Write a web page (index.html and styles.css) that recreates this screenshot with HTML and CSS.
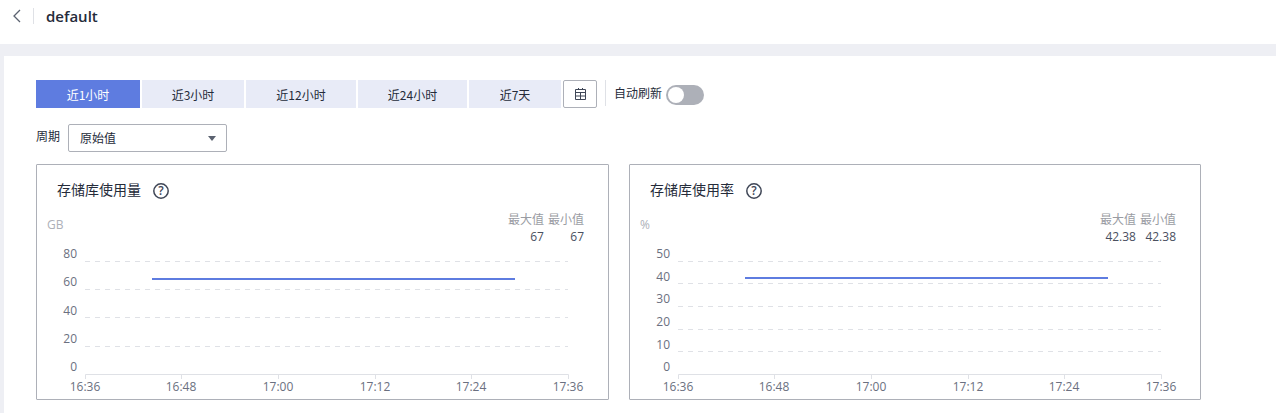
FILE: index.html
```html
<!DOCTYPE html>
<html lang="zh">
<head>
  <meta charset="UTF-8">
  <title>default</title>
  <link rel="stylesheet" href="styles.css">
</head>
<body>
  <header class="top-bar">
    <svg class="back-icon" width="10" height="14" viewBox="0 0 10 14"><path d="M8 1 L2 7 L8 13" fill="none" stroke="#5b6270" stroke-width="1.3"/></svg>
    <span class="top-sep"></span>
    <h1 class="page-title">default</h1>
  </header>

  <main class="panel">
    <div class="range-row">
      <button class="range-btn active w-104">近1小时</button>
      <button class="range-btn w-102">近3小时</button>
      <button class="range-btn w-110">近12小时</button>
      <button class="range-btn w-109">近24小时</button>
      <button class="range-btn w-92">近7天</button>
      <button class="cal-btn">
        <svg width="11" height="12" viewBox="0 0 11 12"><path d="M3.5 0V2M7.5 0V2M0.5 1.5h10v10H0.5zM0.5 4.5h10M0.5 8h10M5.5 4.5V11.5" fill="none" stroke="#3f4656" stroke-width="1"/></svg>
      </button>
      <span class="row-sep"></span>
      <span class="auto-label">自动刷新</span>
      <span class="toggle"><span class="knob"></span></span>
    </div>

    <div class="period-row">
      <span class="period-label">周期</span>
      <div class="select">原始值<span class="caret"></span></div>
    </div>

    <div class="charts">
      <section class="chart-card">
        <div class="card-title">存储库使用量
          <svg class="help" width="16" height="16" viewBox="0 0 16 16"><circle cx="8" cy="8" r="7.2" fill="none" stroke="#3f4656" stroke-width="1.5"/><text x="8" y="12" text-anchor="middle" class="help-mark">?</text></svg>
        </div>
        <div class="legend">
          <div class="legend-col"><span>最大值</span><b>67</b></div>
          <div class="legend-col"><span>最小值</span><b>67</b></div>
        </div>
        <svg class="plot" width="570" height="235" viewBox="0 0 570 235">
          <text x="10" y="64" class="unit">GB</text>
          <g class="grid">
            <path d="M48 96.5H531M48 124.5H531M48 152.5H531M48 181.5H531"/>
          </g>
          <g class="ylabels">
            <text x="40" y="93">80</text><text x="40" y="121">60</text><text x="40" y="150">40</text><text x="40" y="178">20</text><text x="40" y="206">0</text>
          </g>
          <path class="axis" d="M48.5 214V209.5H531.5V214M144.5 209.5V214M241.5 209.5V214M338.5 209.5V214M434.5 209.5V214"/>
          <g class="xlabels">
            <text x="48" y="226">16:36</text><text x="144" y="226">16:48</text><text x="241" y="226">17:00</text><text x="338" y="226">17:12</text><text x="434" y="226">17:24</text><text x="531" y="226">17:36</text>
          </g>
          <path class="line" d="M115 114H478"/>
        </svg>
      </section>

      <section class="chart-card">
        <div class="card-title">存储库使用率
          <svg class="help" width="16" height="16" viewBox="0 0 16 16"><circle cx="8" cy="8" r="7.2" fill="none" stroke="#3f4656" stroke-width="1.5"/><text x="8" y="12" text-anchor="middle" class="help-mark">?</text></svg>
        </div>
        <div class="legend">
          <div class="legend-col"><span>最大值</span><b>42.38</b></div>
          <div class="legend-col"><span>最小值</span><b>42.38</b></div>
        </div>
        <svg class="plot" width="570" height="235" viewBox="0 0 570 235">
          <text x="10" y="64" class="unit">%</text>
          <g class="grid">
            <path d="M48 96.5H531M48 118.5H531M48 141.5H531M48 164.5H531M48 186.5H531"/>
          </g>
          <g class="ylabels">
            <text x="40" y="93">50</text><text x="40" y="116">40</text><text x="40" y="138">30</text><text x="40" y="161">20</text><text x="40" y="184">10</text><text x="40" y="206">0</text>
          </g>
          <path class="axis" d="M48.5 214V209.5H531.5V214M144.5 209.5V214M241.5 209.5V214M338.5 209.5V214M434.5 209.5V214"/>
          <g class="xlabels">
            <text x="48" y="226">16:36</text><text x="144" y="226">16:48</text><text x="241" y="226">17:00</text><text x="338" y="226">17:12</text><text x="434" y="226">17:24</text><text x="531" y="226">17:36</text>
          </g>
          <path class="line" d="M115 113H478"/>
        </svg>
      </section>
    </div>
  </main>
</body>
</html>
```

FILE: styles.css
```css
* {
  box-sizing: border-box;
}

html, body {
  height: 100%;
}

body {
  margin: 0;
  height: 413px;
  overflow: hidden;
  display: flex;
  flex-direction: column;
  background: #eeeff4;
  font-family: "Noto Sans CJK SC", "Open Sans", sans-serif;
  font-size: 12px;
  color: #252b3a;
}

.top-bar {
  height: 44px;
  background: #fff;
  display: flex;
  align-items: flex-start;
  padding: 8px 0 0 12px;
}

.top-sep {
  width: 1px;
  height: 16px;
  background: #dfe1e6;
  margin: 0 12px 0 11px;
}

.back-icon {
  margin-top: 1px;
}

.page-title {
  margin: -3px 0 0;
  font-family: "Open Sans", sans-serif;
  font-size: 15px;
  font-weight: 600;
  line-height: 22px;
  color: #252b3a;
}

.panel {
  flex: 1;
  margin: 12px 0 0 4px;
  background: #fff;
  padding: 24px 0 0 32px;
}

.range-row {
  display: flex;
  align-items: flex-start;
  height: 28px;
}

.range-btn {
  height: 28px;
  border: none;
  margin: 0 2px 0 0;
  padding: 0;
  background: #e8ebf7;
  color: #252b3a;
  font-family: inherit;
  font-size: 12px;
}

.range-btn.active {
  background: #5e7ce0;
  color: #fff;
}

.w-104 { width: 104px; }
.w-102 { width: 102px; }
.w-110 { width: 110px; }
.w-109 { width: 109px; }
.w-92 { width: 92px; }

.cal-btn {
  width: 34px;
  height: 28px;
  padding: 0;
  background: #fff;
  border: 1px solid #adb0b8;
  border-radius: 2px;
  display: flex;
  align-items: center;
  justify-content: center;
}

.row-sep {
  width: 1px;
  height: 26px;
  background: #dfe1e6;
  margin: 0 8px 0 8px;
}

.auto-label {
  line-height: 26px;
  margin-right: 4px;
}

.toggle {
  width: 38px;
  height: 20px;
  margin-top: 5px;
  border-radius: 10px;
  background: #adb0b8;
  padding: 2px;
}

.knob {
  display: block;
  width: 16px;
  height: 16px;
  border-radius: 50%;
  background: #fff;
}

.period-row {
  display: flex;
  align-items: flex-start;
  margin-top: 16px;
}

.period-label {
  width: 32px;
  line-height: 24px;
}

.select {
  position: relative;
  width: 159px;
  height: 28px;
  border: 1px solid #adb0b8;
  border-radius: 2px;
  padding-left: 11px;
  line-height: 26px;
}

.caret {
  position: absolute;
  right: 10px;
  top: 11px;
  border-left: 4px solid transparent;
  border-right: 4px solid transparent;
  border-top: 5px solid #5b6270;
}

.charts {
  display: flex;
  gap: 20px;
  margin-top: 12px;
}

.chart-card {
  position: relative;
  width: 573px;
  height: 236px;
  border: 1px solid #adb0b8;
  border-radius: 1px;
}

.chart-card + .chart-card {
  width: 572px;
}

.card-title {
  display: flex;
  align-items: flex-start;
  padding: 14px 0 0 20px;
  font-size: 14px;
  line-height: 20px;
  color: #252b3a;
}

.help {
  margin: 4px 0 0 12px;
}

.help-mark {
  font-family: "Open Sans", sans-serif;
  font-size: 12px;
  font-weight: 600;
  fill: #3f4656;
}

.legend {
  position: absolute;
  right: 24px;
  top: 45px;
  display: flex;
  gap: 4px;
  text-align: right;
}

.legend-col span {
  display: block;
  color: #9a9ca3;
  line-height: 18px;
}

.legend-col b {
  display: block;
  font-weight: 400;
  font-family: "Open Sans", sans-serif;
  color: #4a5060;
  line-height: 17px;
}

.plot {
  position: absolute;
  left: 0;
  top: 0;
}

.plot text {
  font-family: "Open Sans", sans-serif;
  font-size: 12px;
}

.unit {
  fill: #adb0b8;
}

.grid path {
  fill: none;
  stroke: #dfe1e6;
  stroke-dasharray: 5 5;
}

.ylabels text {
  fill: #6b7080;
  text-anchor: end;
}

.xlabels text {
  fill: #6b7080;
  text-anchor: middle;
}

.axis {
  fill: none;
  stroke: #dfe1e6;
}

.line {
  fill: none;
  stroke: #5e7ce0;
  stroke-width: 2;
}
```
